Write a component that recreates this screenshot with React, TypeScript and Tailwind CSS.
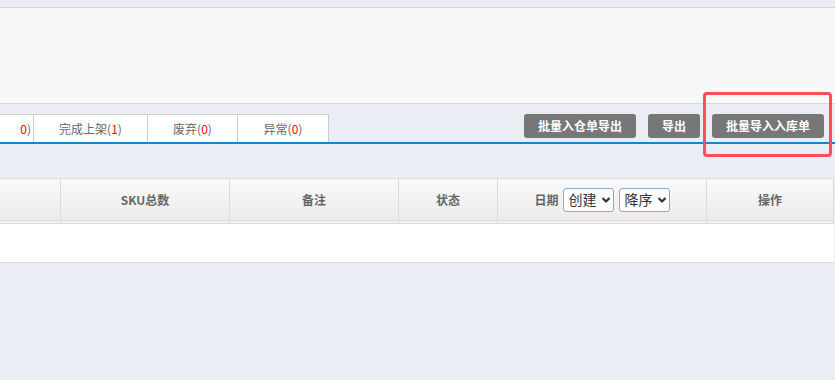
import React from "react";

const Chevron = () => (
  <svg width="10" height="8" viewBox="0 0 10 8" className="ml-[4px]">
    <path d="M1.5 2 L5 5.5 L8.5 2" fill="none" stroke="#333" strokeWidth="2.2" />
  </svg>
);

const FakeSelect = ({ label, width }: { label: string; width: string }) => (
  <div
    className={`flex items-center h-[24px] ${width} border border-[#8fa9cc] rounded-[3px] bg-white pl-[5px] text-[14px] text-[#333] font-normal`}
  >
    <span>{label}</span>
    <Chevron />
  </div>
);

const Tab = ({ label, count, width }: { label: string; count: number; width: string }) => (
  <div
    className={`${width} h-[28px] bg-white border-t border-r border-[#ccc] flex items-center justify-center text-[12px] text-[#666]`}
  >
    {label}(<span className="text-[#f00]">{count}</span>)
  </div>
);

export default function App() {
  return (
    <div
      className="w-[835px] h-[380px] overflow-hidden bg-[#eaedf4]"
      style={{ fontFamily: '"Noto Sans CJK SC", "Noto Sans", sans-serif' }}
    >
      <div className="pt-[7px]">
        <div className="h-[97px] bg-[#f8f8f8] border-y border-[#d8d8d8]" />
      </div>

      <div className="mt-[10px] border-b-2 border-[#1387d1] flex items-start">
        <div className="flex">
          <div className="w-[34px] h-[28px] bg-white border-t border-r border-[#ccc] overflow-hidden flex items-center justify-end pr-[2px] text-[12px] text-[#666]">
            <span className="whitespace-nowrap">
              <span className="text-[#f00]">0</span>)
            </span>
          </div>
          <Tab label="完成上架" count={1} width="w-[114px]" />
          <Tab label="废弃" count={0} width="w-[90px]" />
          <Tab label="异常" count={0} width="w-[91px]" />
        </div>
        <div className="ml-auto mr-[11px] flex gap-[12px] text-[12px] font-bold text-white">
          <div className="w-[112px] h-[24px] rounded-[3px] bg-[#777] flex items-center justify-center">批量入仓单导出</div>
          <div className="w-[52px] h-[24px] rounded-[3px] bg-[#777] flex items-center justify-center">导出</div>
          <div className="relative w-[112px] h-[24px] rounded-[3px] bg-[#777] flex items-center justify-center">
            批量导入入库单
            <div className="absolute left-[-9px] top-[-22px] right-[-8px] bottom-[-19px] border-[3px] border-[#ff4d5e] rounded-[4px]" />
          </div>
        </div>
      </div>

      <div className="mt-[34px] w-[834px]">
        <div className="flex h-[43px] border-y border-r border-[#dcdcdc] bg-gradient-to-b from-[#f9f9f9] to-[#ececec] text-[12px] font-bold text-[#666]">
          <div className="w-[61px] border-r border-[#dcdcdc]" />
          <div className="w-[169px] border-r border-[#dcdcdc] flex items-center justify-center">SKU总数</div>
          <div className="w-[169px] border-r border-[#dcdcdc] flex items-center justify-center">备注</div>
          <div className="w-[99px] border-r border-[#dcdcdc] flex items-center justify-center">状态</div>
          <div className="w-[209px] border-r border-[#dcdcdc] flex items-center justify-center">
            <span className="mr-[4px]">日期</span>
            <FakeSelect label="创建" width="w-[51px]" />
            <div className="w-[5px]" />
            <FakeSelect label="降序" width="w-[51px]" />
          </div>
          <div className="flex-1 flex items-center justify-center">操作</div>
        </div>
        <div className="flex h-[3px] border-b border-r border-[#dcdcdc] bg-[#f0f0f0]">
          <div className="w-[61px] border-r border-[#dcdcdc]" />
          <div className="w-[169px] border-r border-[#dcdcdc]" />
          <div className="w-[169px] border-r border-[#dcdcdc]" />
          <div className="w-[99px] border-r border-[#dcdcdc]" />
          <div className="w-[209px] border-r border-[#dcdcdc]" />
          <div className="flex-1" />
        </div>
        <div className="h-[39px] bg-white border-b border-[#dcdcdc]" />
      </div>
    </div>
  );
}
